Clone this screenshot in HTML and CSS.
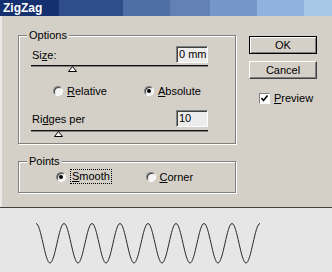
FILE: index.html
```html
<!DOCTYPE html>
<html>
  <head>
    <meta charset="utf-8">
    <link rel="stylesheet" href="styles.css">
    <title>ZigZag</title>
  </head>
  <body>
    <div class="titlebar">ZigZag</div>

    <div class="dialog">
      <div class="main">
        <div class="group options">
          <span class="group-title">Options</span>
          <div class="field">
            <label>Si<u>z</u>e:</label>
            <div class="textbox">0 mm</div>
          </div>
          <div class="slider">
            <svg class="thumb thumb-size" width="9" height="6" viewBox="0 0 9 6"><polygon points="0.5,5.5 4.5,0.5 8.5,5.5" fill="#fff" stroke="#000"/></svg>
          </div>
          <div class="radio-row">
            <div class="option"><span class="radio"></span><span><u>R</u>elative</span></div>
            <div class="option"><span class="radio checked"></span><span><u>A</u>bsolute</span></div>
          </div>
          <div class="field field-ridges">
            <label>Ri<u>d</u>ges per</label>
            <div class="textbox">10</div>
          </div>
          <div class="slider slider-ridges">
            <svg class="thumb thumb-ridges" width="9" height="6" viewBox="0 0 9 6"><polygon points="0.5,5.5 4.5,0.5 8.5,5.5" fill="#fff" stroke="#000"/></svg>
          </div>
        </div>

        <div class="group points">
          <span class="group-title">Points</span>
          <div class="radio-row points-row">
            <div class="option"><span class="radio checked"></span><span class="focus"><u>S</u>mooth</span></div>
            <div class="option"><span class="radio"></span><span><u>C</u>orner</span></div>
          </div>
        </div>
      </div>

      <div class="buttons">
        <div class="button default">OK</div>
        <div class="button">Cancel</div>
        <div class="check-row">
          <span class="checkbox">
            <svg width="9" height="9" viewBox="0 0 9 9"><path d="M1.5 4 L3.5 6.5 L7.5 1.5" fill="none" stroke="#000" stroke-width="1.6"/></svg>
          </span>
          <span><u>P</u>review</span>
        </div>
      </div>
    </div>

    <div class="preview">
      <svg width="332" height="64" viewBox="0 0 332 64">
        <path d="M36 15.5 C41.1 15.5 44.9 55 50 55 S58.9 15.5 64 15.5 S72.9 55 78 55 S86.9 15.5 92 15.5 S100.9 55 106 55 S114.9 15.5 120 15.5 S128.9 55 134 55 S142.9 15.5 148 15.5 S156.9 55 162 55 S170.9 15.5 176 15.5 S184.9 55 190 55 S198.9 15.5 204 15.5 S212.9 55 218 55 S226.9 15.5 232 15.5 S240.9 55 246 55 S254.9 15.5 260 15.5" fill="none" stroke="#2a2a2a" stroke-width="1"/>
      </svg>
    </div>
  </body>
</html>
```

FILE: styles.css
```css
* {
  box-sizing: border-box;
}
body {
  margin: 0;
  width: 332px;
  height: 272px;
  overflow: hidden;
  font-family: "Liberation Sans", Arial, sans-serif;
  font-size: 11px;
  color: #000;
  background-color: #d4d0c8;
}
u {
  text-decoration-thickness: 1px;
  text-underline-offset: 1px;
}
.titlebar {
  height: 16px;
  padding-left: 3px;
  line-height: 16px;
  font-size: 12px;
  font-weight: 700;
  color: #fff;
  background: linear-gradient(to right,
    #14306e 0 59px, #2e4e8a 59px 123px, #4e6ea6 123px 170px,
    #6282b6 170px 210px, #7496c8 210px 257px, #8fb2de 257px 304px,
    #a8c8e8 304px 332px);
}
.dialog {
  display: flex;
  height: 191px;
  padding: 19px 0 0 16px;
  border-left: 2px solid #eceae6;
}
.main {
  width: 218px;
}
.group {
  position: relative;
  border: 1px solid #808080;
  box-shadow: inset 1px 1px 0 #fff, 1px 1px 0 #fff;
}
.group-title {
  position: absolute;
  top: -7px;
  left: 8px;
  padding: 0 2px;
  line-height: 13px;
  background-color: #d4d0c8;
}
.options {
  height: 109px;
  padding-top: 10px;
}
.points {
  height: 32px;
  margin-top: 17px;
}
.field {
  display: flex;
  justify-content: space-between;
  align-items: center;
  height: 17px;
  margin: 0 27px 0 13px;
}
.field-ridges {
  margin-top: 14px;
}
.textbox {
  flex: none;
  width: 32px;
  height: 17px;
  padding-left: 2px;
  overflow: hidden;
  white-space: nowrap;
  line-height: 14px;
  background-color: #ececec;
  border: 1px solid;
  border-color: #808080 #fff #fff #808080;
  box-shadow: inset 1px 1px 0 #404040;
}
.slider {
  position: relative;
  height: 0;
  margin: 2px 27px 0 12px;
  border-top: 1px solid #101010;
  border-bottom: 1px solid #808080;
}
.slider-ridges {
  margin-top: 3px;
}
.thumb {
  position: absolute;
  top: 0;
  display: block;
}
.thumb-size {
  left: 37px;
}
.thumb-ridges {
  left: 23px;
}
.radio-row {
  display: flex;
  margin-top: 18px;
  padding-left: 34px;
}
.option {
  display: flex;
  align-items: center;
  gap: 4px;
  width: 97px;
  height: 11px;
}
.points-row {
  margin-top: 9px;
  padding-left: 37px;
}
.points-row .option {
  width: 101px;
}
.radio {
  position: relative;
  flex: none;
  width: 10px;
  height: 10px;
  border-radius: 50%;
  background-color: #f4f4f4;
  border: 1px solid;
  border-color: #808080 #fff #fff #808080;
  box-shadow: inset 1px 1px 0 #404040;
}
.radio.checked::after {
  content: "";
  position: absolute;
  top: 2px;
  left: 2px;
  width: 4px;
  height: 4px;
  border-radius: 50%;
  background-color: #000;
}
.focus {
  padding: 1px 1px;
  border: 1px dotted #000;
  line-height: 11px;
}
.buttons {
  display: flex;
  flex-direction: column;
  width: 68px;
  margin-left: 13px;
  padding-top: 1px;
}
.button {
  height: 18px;
  line-height: 16px;
  text-align: center;
  border: 1px solid;
  border-color: #fff #404040 #404040 #fff;
  box-shadow: inset -1px -1px 0 #808080;
}
.button + .button {
  margin-top: 7px;
}
.button.default {
  border-color: #000;
  box-shadow: inset 1px 1px 0 #fff, inset -1px -1px 0 #808080;
}
.check-row {
  display: flex;
  align-items: center;
  gap: 4px;
  margin: 13px 0 0 10px;
}
.checkbox {
  display: flex;
  align-items: center;
  justify-content: center;
  width: 11px;
  height: 11px;
  background-color: #fff;
  border: 1px solid;
  border-color: #808080 #fff #fff #808080;
}
.preview {
  height: 65px;
  border-top: 1px solid #404040;
  background-color: #e6e6e6;
}
.preview svg {
  display: block;
}
```
